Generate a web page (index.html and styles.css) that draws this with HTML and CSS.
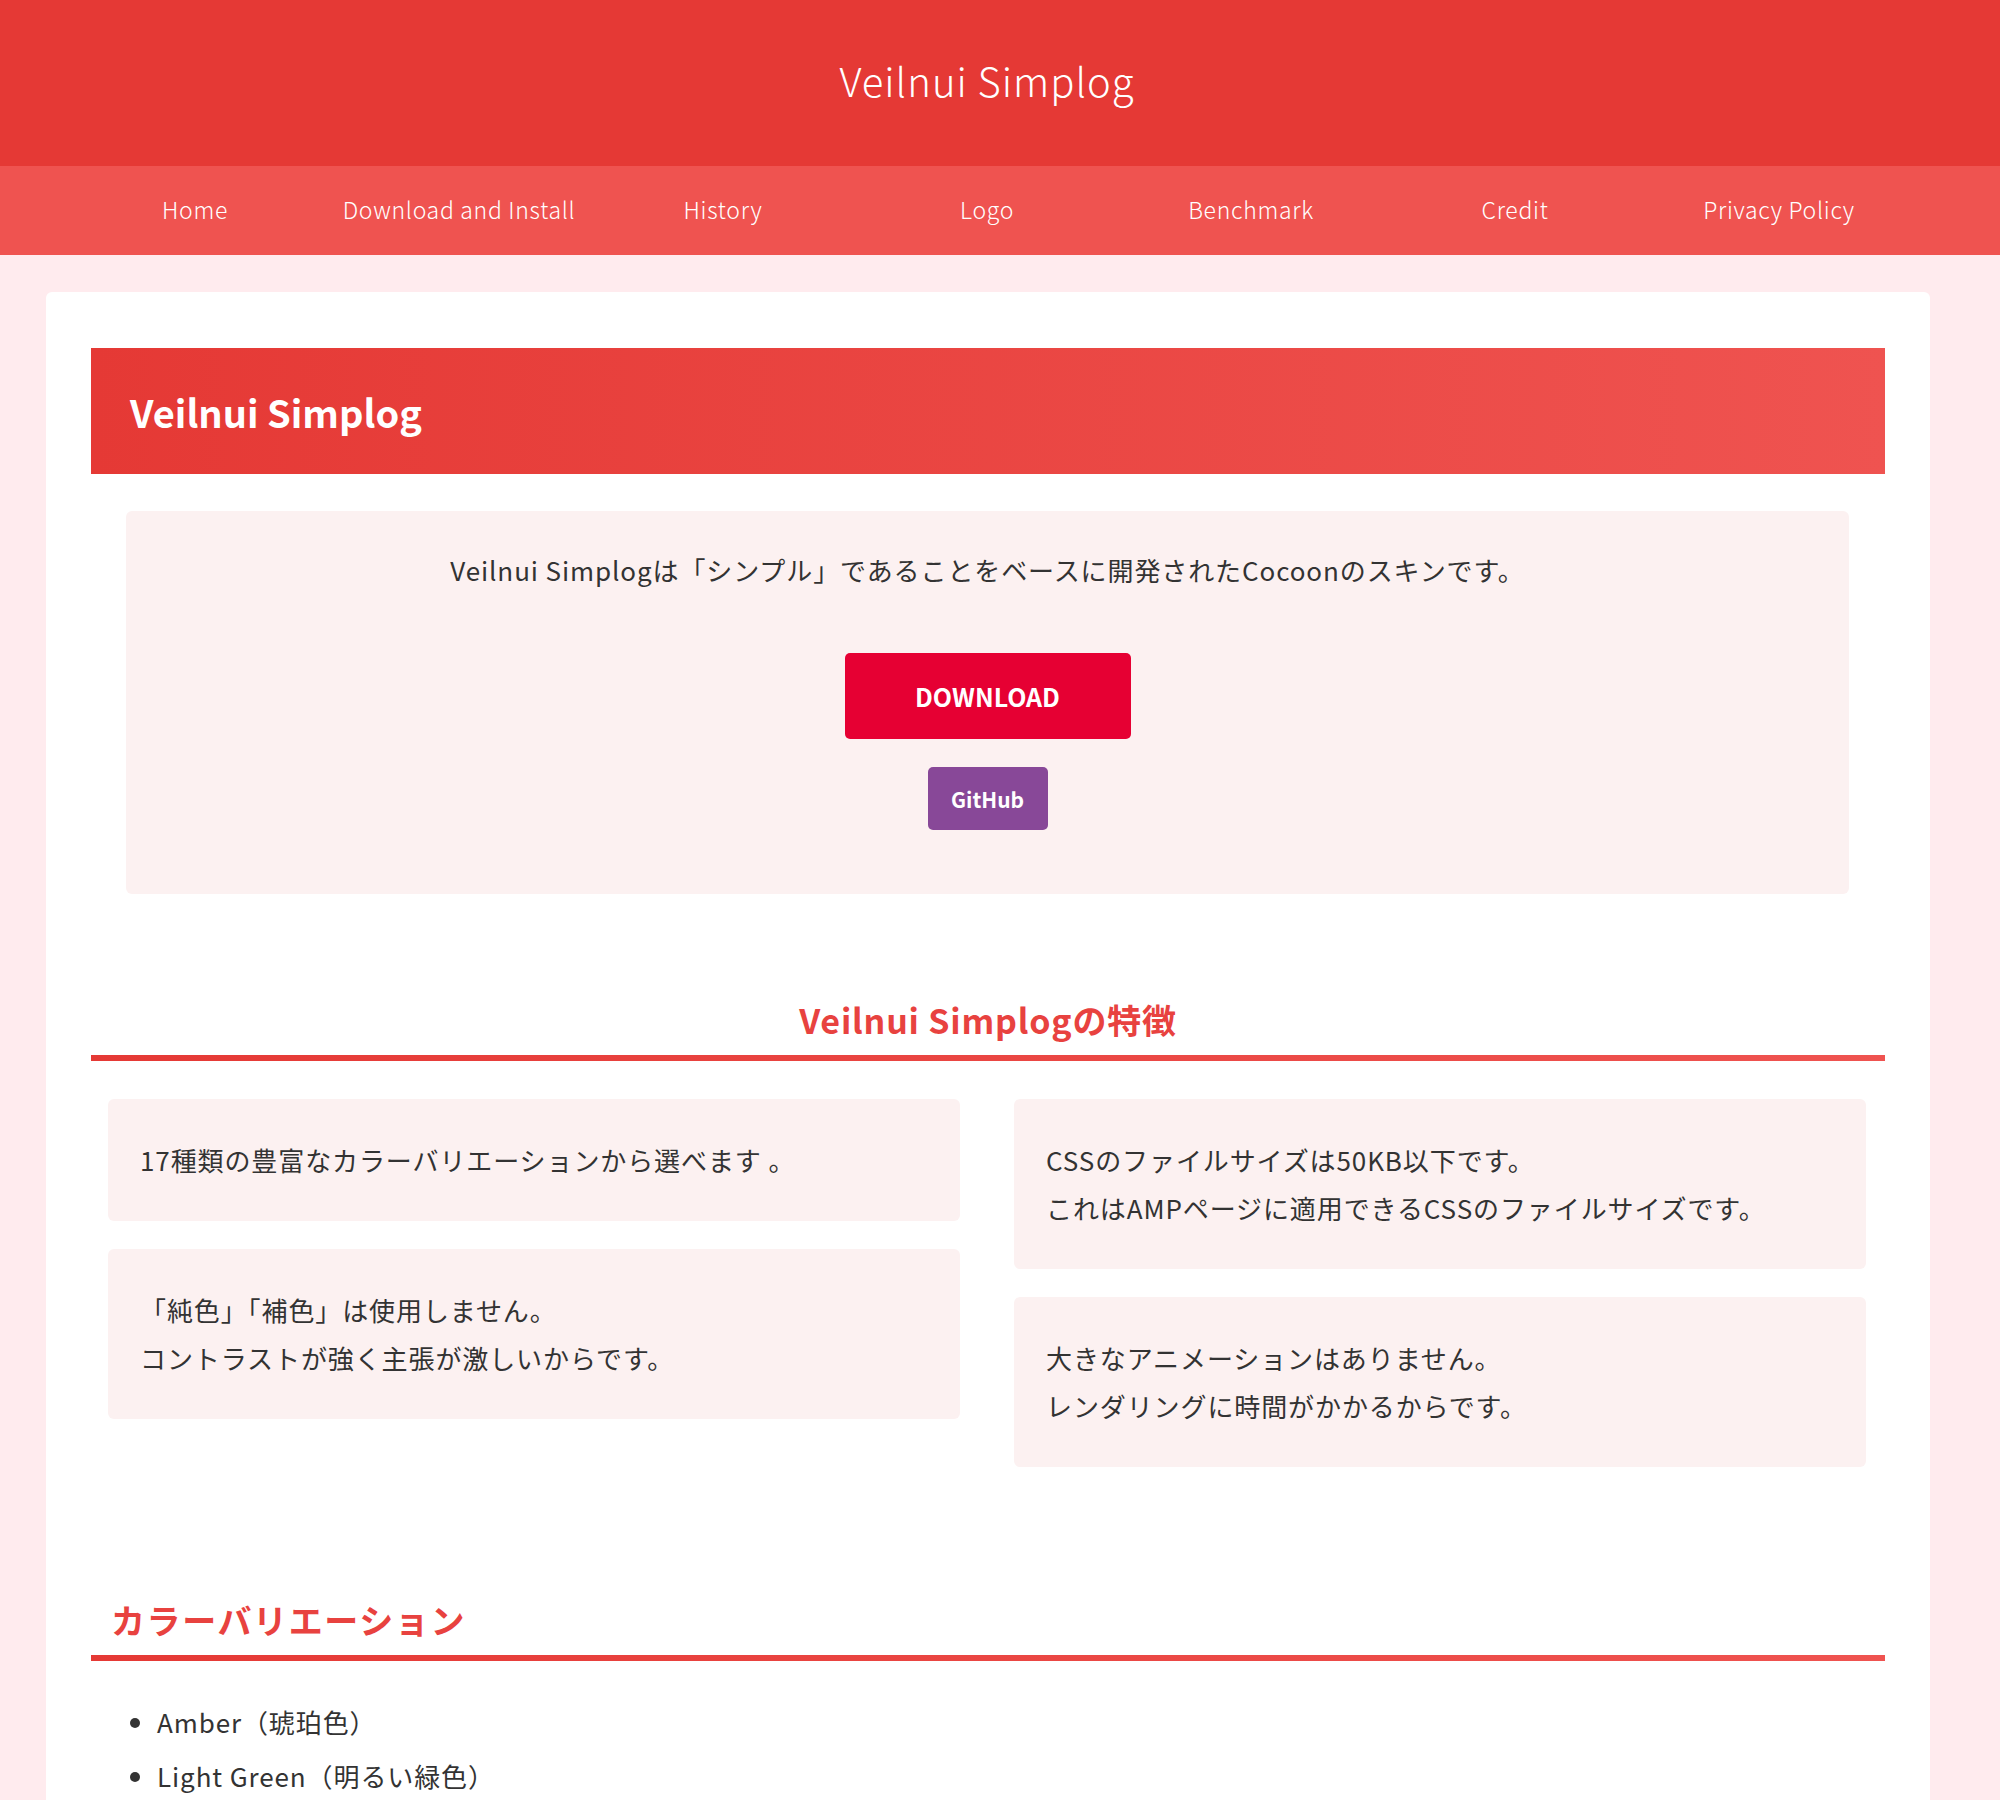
FILE: index.html
```html
<!DOCTYPE html>
<html lang="ja">
<head>
    <meta charset="utf-8">
    <title>Veilnui Simplog</title>
    <link rel="stylesheet" href="styles.css">
</head>
<body>
    <header class="site-header">
        <div class="wrap">
            <div class="site-title">Veilnui Simplog</div>
        </div>
    </header>

    <nav class="global-nav">
        <div class="wrap">
            <ul class="nav-list">
                <li><a href="#">Home</a></li>
                <li><a href="#">Download and Install</a></li>
                <li><a href="#">History</a></li>
                <li><a href="#">Logo</a></li>
                <li><a href="#">Benchmark</a></li>
                <li><a href="#">Credit</a></li>
                <li><a href="#">Privacy Policy</a></li>
            </ul>
        </div>
    </nav>

    <div class="wrap">
        <main class="main-card">
            <h1 class="entry-title">Veilnui Simplog</h1>

            <div class="intro-box">
                <p class="intro-text">Veilnui Simplogは「シンプル」であることをベースに開発されたCocoonのスキンです。</p>
                <a class="btn btn-download" href="#">DOWNLOAD</a>
                <a class="btn btn-github" href="#">GitHub</a>
            </div>

            <h2 class="section-title center">Veilnui Simplogの特徴</h2>

            <div class="feature-grid">
                <div class="feature-col">
                    <div class="feature-box">
                        <p>17種類の豊富なカラーバリエーションから選べます 。</p>
                    </div>
                    <div class="feature-box">
                        <p>「純色」「補色」は使用しません。</p>
                        <p>コントラストが強く主張が激しいからです。</p>
                    </div>
                </div>
                <div class="feature-col">
                    <div class="feature-box">
                        <p>CSSのファイルサイズは50KB以下です。</p>
                        <p>これはAMPページに適用できるCSSのファイルサイズです。</p>
                    </div>
                    <div class="feature-box">
                        <p>大きなアニメーションはありません。</p>
                        <p>レンダリングに時間がかかるからです。</p>
                    </div>
                </div>
            </div>

            <h2 class="section-title left">カラーバリエーション</h2>

            <ul class="color-list">
                <li>Amber（琥珀色）</li>
                <li>Light Green（明るい緑色）</li>
            </ul>
        </main>
    </div>
</body>
</html>
```

FILE: styles.css
```css
body {
    margin: 0;
    background-color: #ffebee;
    color: #333;
    font-family: "Noto Sans CJK JP", "Noto Sans", sans-serif;
    font-size: 26px;
}

a {
    color: inherit;
    text-decoration: none;
}

.wrap {
    width: 1974px;
}

/* header */
.site-header {
    background-color: #e53935;
    height: 166px;
}

.site-header .wrap {
    height: 100%;
    display: flex;
    align-items: center;
    justify-content: center;
}

.site-title {
    color: #fff;
    font-size: 40px;
    font-weight: 300;
    letter-spacing: 1px;
    margin-bottom: 6px;
}

/* global navigation */
.global-nav {
    background-color: #ef5350;
    height: 89px;
}

.nav-list {
    list-style: none;
    margin: 0 auto;
    padding: 0;
    width: 1848px;
    height: 89px;
    display: flex;
}

.nav-list li {
    width: 264px;
    display: flex;
    align-items: center;
    justify-content: center;
}

.nav-list a {
    color: #fff;
    font-size: 23px;
    font-weight: 300;
    letter-spacing: 0.7px;
    margin-bottom: 3px;
}

/* main card */
.main-card {
    background: #fff;
    margin: 37px 44px 0 46px;
    padding: 56px 45px 60px;
    border-radius: 6px;
}

.entry-title {
    margin: 0;
    height: 126px;
    padding-left: 39px;
    display: flex;
    align-items: center;
    background: linear-gradient(to right, #e53935, #ef5350);
    color: #fff;
    font-size: 38px;
    font-weight: 700;
}

.intro-box {
    margin: 37px 36px 0 35px;
    padding: 36px 20px 64px;
    background: #fcf1f1;
    border-radius: 6px;
    text-align: center;
}

.intro-text {
    margin: 0;
    line-height: 46px;
    letter-spacing: 0.9px;
}

.btn {
    display: flex;
    align-items: center;
    justify-content: center;
    margin: 0 auto;
    color: #fff;
    font-weight: 700;
    border-radius: 5px;
}

.btn-download {
    margin-top: 60px;
    width: 286px;
    height: 86px;
    background: #e60033;
    font-size: 25px;
}

.btn-github {
    margin-top: 28px;
    width: 120px;
    height: 63px;
    background: #884898;
    font-size: 21px;
}

/* section headings */
.section-title {
    margin: 102px 0 0;
    padding-bottom: 11px;
    line-height: 48px;
    font-size: 34px;
    font-weight: 700;
    color: #e8423f;
    border-bottom: 6px solid #e53935;
    border-image: linear-gradient(to right, #e53935, #ef5350) 1;
}

.section-title.center {
    text-align: center;
    letter-spacing: 0.8px;
}

.section-title.left {
    margin-top: 129px;
    padding-left: 20px;
    letter-spacing: 1.6px;
}

/* features */
.feature-grid {
    display: grid;
    grid-template-columns: 1fr 1fr;
    gap: 54px;
    padding: 0 19px 0 17px;
    margin-top: 38px;
}

.feature-col {
    display: flex;
    flex-direction: column;
    gap: 28px;
}

.feature-box {
    background: #fcf1f1;
    border-radius: 6px;
    padding: 37px 32px;
}

.feature-box p {
    margin: 0;
    line-height: 48px;
    letter-spacing: 0.9px;
}

/* color list */
.color-list {
    margin: 34px 0 0;
    padding-left: 66px;
}

.color-list li {
    line-height: 54px;
    letter-spacing: 0.9px;
}
```
